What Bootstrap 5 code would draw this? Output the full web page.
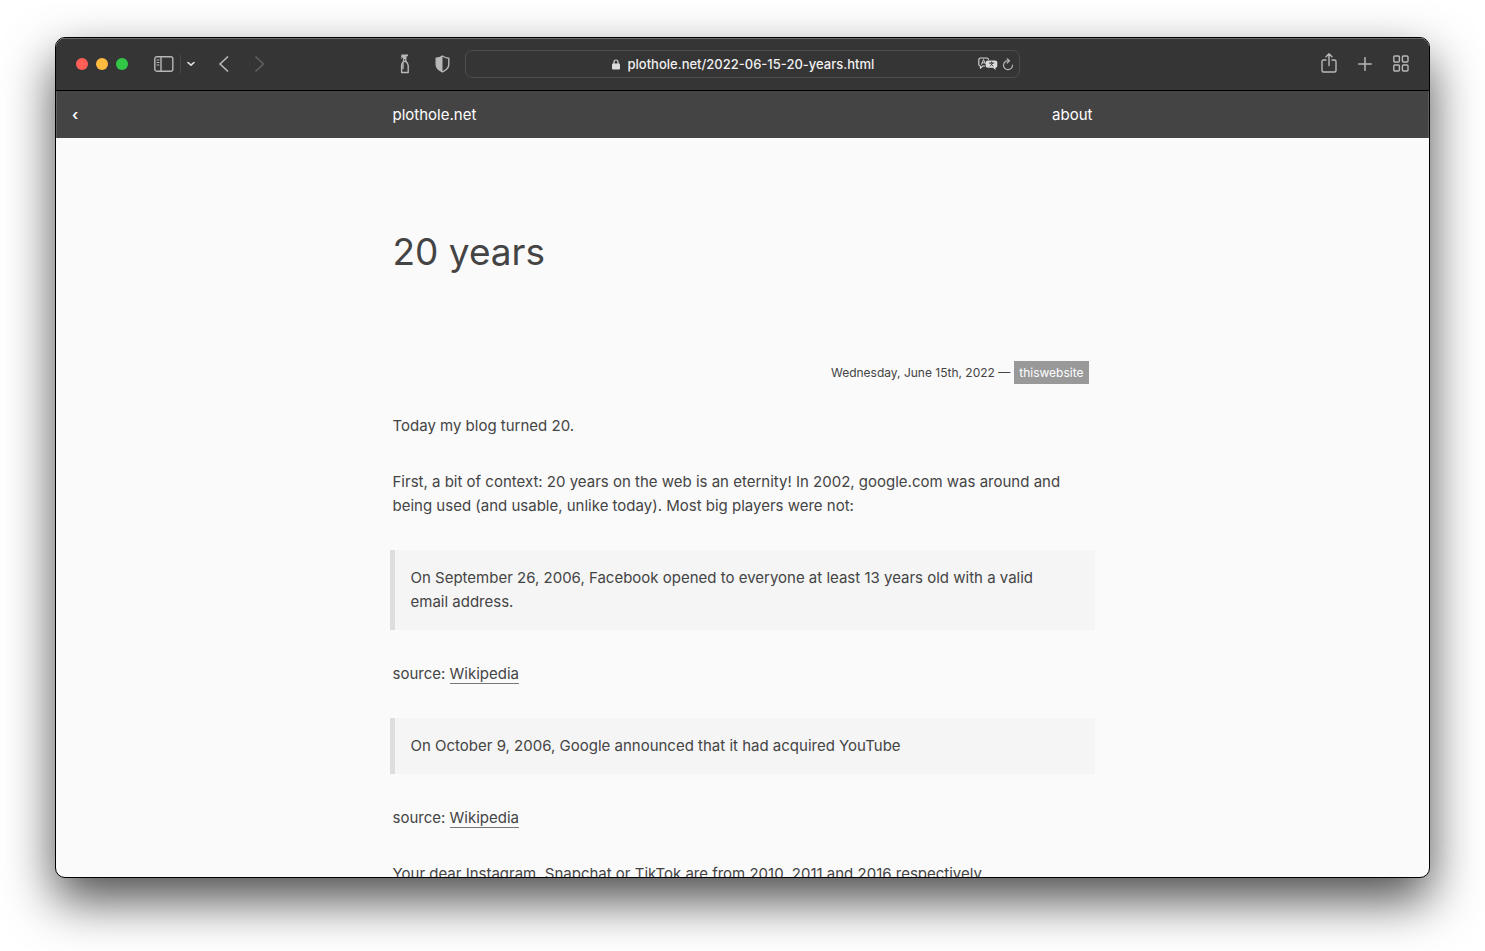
<!DOCTYPE html>
<html lang="en">
<head>
<meta charset="utf-8">
<meta name="viewport" content="width=device-width, initial-scale=1">
<title>20 years</title>
<link href="https://cdn.jsdelivr.net/npm/bootstrap@5.3.0/dist/css/bootstrap.min.css" rel="stylesheet">
<style>
body { font-family: Inter, "Liberation Sans", sans-serif; font-size: 15px; line-height: 24px; color: #444; background: #fff; padding: 37px 55px 73px; }
.browser { height: calc(100vh - 110px); border: 1px solid #000; border-radius: 10px; background: #fafafa; box-shadow: 0 22px 50px rgba(0,0,0,.7); }

/* Browser toolbar */
.toolbar { height: 53px; padding: 0 20px; background: #353535; border-bottom: 1px solid #000; box-shadow: inset 0 1px #6a6a6a; color: #b8b8b8; }
.toolbar svg { display: block; fill: none; stroke: currentColor; stroke-width: 1.4; stroke-linecap: round; stroke-linejoin: round; }
.toolbar-side { flex: 1 1 0; }
.tool { padding: 0; border: 0; background: none; color: inherit; }
.tool:disabled { color: #5f5f5f; }
.light { width: 12px; height: 12px; border-radius: 50%; padding: 0; border: 0; }
.light-close { background: #fe5f57; }
.light-min { background: #febb40; }
.light-max { background: #33c748; }
.sidebar-tools { gap: 6px; margin-left: 26px; }
.history-tools { gap: 26px; margin-left: 24px; }
.extension-tools { gap: 25px; margin-right: 15px; }
.window-tools { gap: 21px; }
.split { width: 1px; height: 18px; background: #484848; }
.address { flex: 0 1 555px; height: 28px; padding: 0 5px; border: 1px solid #4d4d4d; border-radius: 7px; color: #dcdcdc; }
.address input { width: 246px; min-width: 0; padding: 0; border: 0; background: none; color: #f0f0f0; font-size: 13px; line-height: 20px; font-weight: 500; }

/* Site */
.site-nav { height: 47px; background: #444; box-shadow: inset 1px 0 #5c5c5c, inset -1px 0 #5c5c5c; }
.site-nav a { color: #fff; text-decoration: none; }
.nav-back { padding-left: 16px; font-weight: 600; }
.column { width: 700px; max-width: 100%; }
h1 { font-size: 37px; line-height: 48px; font-weight: 400; margin: 90px 0 85px; }
.post-meta { font-size: 12px; line-height: 23px; margin-bottom: 30px; padding-right: 4px; }
.post-tag { background: #999; color: #fff; text-decoration: none; padding: 0 5px; }
.post p { margin-bottom: 32px; }
.post blockquote { font-size: 15px; margin: 0 -2px 32px -3px; padding: 16px 24px 16px 16px; border-left: 5px solid #ddd; background: #f5f5f5; }
.post blockquote p { margin: 0; }
.source-link { color: inherit; text-decoration: none; border-bottom: 1px solid #777; }
</style>
</head>
<body>
<div class="browser d-flex flex-column overflow-hidden">
  <header class="toolbar d-flex align-items-center flex-shrink-0">
    <div class="toolbar-side d-flex align-items-center">
      <div class="d-flex gap-2">
        <button class="light light-close" type="button" aria-label="Close"></button>
        <button class="light light-min" type="button" aria-label="Minimize"></button>
        <button class="light light-max" type="button" aria-label="Zoom"></button>
      </div>
      <div class="sidebar-tools d-flex align-items-center">
        <button class="tool" type="button" aria-label="Sidebar">
          <svg width="20" height="16" viewBox="0 0 20 16"><rect x="0.800" y="0.800" width="18" height="14.400" rx="2"/><path d="M7 1v14"/><path d="M3 4h2M3 6.500h2M3 9h2" stroke-width="1"/></svg>
        </button>
        <span class="split"></span>
        <button class="tool" type="button" aria-label="Tab groups">
          <svg width="8" height="6" viewBox="0 0 8 6"><path d="M1 1.500l3 2.700 3-2.700" stroke="#e0e0e0" stroke-width="1.600"/></svg>
        </button>
      </div>
      <div class="history-tools d-flex align-items-center">
        <button class="tool" type="button" aria-label="Back">
          <svg width="10" height="16" viewBox="0 0 10 16"><path d="M8.500 1L1 8l7.500 7" stroke-width="1.700"/></svg>
        </button>
        <button class="tool" type="button" aria-label="Forward" disabled>
          <svg width="10" height="16" viewBox="0 0 10 16"><path d="M1 1l7.500 7L1 15" stroke-width="1.700"/></svg>
        </button>
      </div>
      <div class="extension-tools d-flex align-items-center ms-auto">
        <button class="tool" type="button" aria-label="Cleaner">
          <svg width="10" height="20" viewBox="0 0 10 20"><path d="M1.500 .5H8v1.800H6.500V5H3V3.300L1.200 5 .8 4.500l1-1.500H1z" fill="currentColor" stroke="none"/><path d="M3.700 5v2.500M5.800 5v2.500" stroke-width="1.200"/><path d="M3.400 7.500C2 9 1.600 10 1.600 11.500v7h6.600v-7c0-1.500-.7-2.500-2.200-4z" stroke-width="1.400"/><path d="M3 9.500v5" stroke-width="1.400"/></svg>
        </button>
        <button class="tool" type="button" aria-label="Privacy report">
          <svg width="15" height="18" viewBox="0 0 15 18"><path d="M7.500 1c2 1.300 4.300 2 6.300 2.300v6.200c0 3.300-2.800 5.700-6.300 7.500-3.500-1.800-6.300-4.200-6.300-7.500V3.300C3.200 3 5.500 2.300 7.500 1z"/><path d="M7.500 1v16C4 15.200 1.200 12.800 1.200 9.500V3.300C3.200 3 5.500 2.300 7.500 1z" fill="currentColor" stroke="none"/></svg>
        </button>
      </div>
    </div>
    <div class="address d-flex align-items-center">
      <div class="toolbar-side"></div>
      <svg class="me-2" width="8" height="11" viewBox="0 0 8 11"><rect x="0" y="4.500" width="8" height="6" rx="1" fill="currentColor" stroke="none"/><path d="M2 5V3a2 2 0 0 1 4 0v2" stroke-width="1.200"/></svg>
      <input type="text" aria-label="Address" value="plothole.net/2022-06-15-20-years.html">
      <div class="toolbar-side d-flex align-items-center justify-content-end">
        <button class="tool me-1" type="button" aria-label="Translate">
          <svg width="20" height="14" viewBox="0 0 20 14"><path d="M10.500 2.500C10.300 1.500 9.800 1 8.800 1H2.600C1.400 1 .8 1.700 .8 2.800v4.400C.8 8.300 1.400 9 2.400 9v2.300L4.700 9h2" stroke-width="1.100"/><path d="M3.500 7.300l2-4.800 1.800 4M4.300 5.800h2.400" stroke-width=".9"/><path d="M10 3.500h7c1.500 0 2.300.7 2.300 2v3.200c0 1.300-.7 2-1.800 2V13l-2.400-2.300H10c-1.500 0-2.300-.7-2.300-2V5.500c0-1.300.8-2 2.300-2z" fill="currentColor" stroke="none"/><path d="M11.300 6h4.600M13.600 4.800V6M12.200 9l2.600-2.800M12.500 6.500L15 9" stroke="#353535" stroke-width=".9"/></svg>
        </button>
        <button class="tool" type="button" aria-label="Reload">
          <svg width="12" height="13" viewBox="0 0 12 13"><path d="M7 2.800A4.500 4.500 0 1 0 10.500 7M5.200 .8l2.300 2-2.300 2.200" stroke="#b4b4b4" stroke-width="1.200"/></svg>
        </button>
      </div>
    </div>
    <div class="toolbar-side window-tools d-flex align-items-center justify-content-end">
      <button class="tool" type="button" aria-label="Share">
        <svg width="16" height="22" viewBox="0 0 16 22"><path d="M5 7H2.500C1.500 7 1 7.500 1 8.500v9c0 1 .5 1.500 1.500 1.500h11c1 0 1.500-.5 1.500-1.500v-9C15 7.500 14.500 7 13.500 7H11M8 12.500V1M5 3.800l3-3 3 3"/></svg>
      </button>
      <button class="tool" type="button" aria-label="New tab">
        <svg width="14" height="14" viewBox="0 0 14 14"><path d="M7 .7v12.600M.7 7h12.600" stroke-width="1.500"/></svg>
      </button>
      <button class="tool" type="button" aria-label="Tab overview">
        <svg width="16" height="18" viewBox="0 0 16 18"><rect x=".8" y="1" width="5.600" height="6" rx="1"/><rect x="9.400" y="1" width="5.600" height="6" rx="1"/><rect x=".8" y="10" width="5.600" height="6" rx="1"/><rect x="9.400" y="10" width="5.600" height="6" rx="1"/></svg>
      </button>
    </div>
  </header>

  <nav class="site-nav d-flex align-items-center flex-shrink-0">
    <div class="toolbar-side"><a class="nav-back" href="#" aria-label="Previous post">‹</a></div>
    <div class="column d-flex justify-content-between">
      <a href="#">plothole.net</a>
      <a href="#">about</a>
    </div>
    <div class="toolbar-side"></div>
  </nav>

  <main class="flex-fill overflow-hidden">
    <article class="post column mx-auto">
      <h1>20 years</h1>
      <div class="post-meta d-flex justify-content-end gap-1">
        <span>Wednesday, June 15th, 2022 —</span>
        <a class="post-tag" href="#">thiswebsite</a>
      </div>
      <p>Today my blog turned 20.</p>
      <p>First, a bit of context: 20 years on the web is an eternity! In 2002, google.com was around and being used (and usable, unlike today). Most big players were not:</p>
      <blockquote><p>On September 26, 2006, Facebook opened to everyone at least 13 years old with a valid email address.</p></blockquote>
      <p>source: <a class="source-link" href="#">Wikipedia</a></p>
      <blockquote><p>On October 9, 2006, Google announced that it had acquired YouTube</p></blockquote>
      <p>source: <a class="source-link" href="#">Wikipedia</a></p>
      <p>Your dear Instagram, Snapchat or TikTok are from 2010, 2011 and 2016 respectively.</p>
    </article>
  </main>
</div>
<script src="https://cdn.jsdelivr.net/npm/bootstrap@5.3.0/dist/js/bootstrap.bundle.min.js"></script>
</body>
</html>
